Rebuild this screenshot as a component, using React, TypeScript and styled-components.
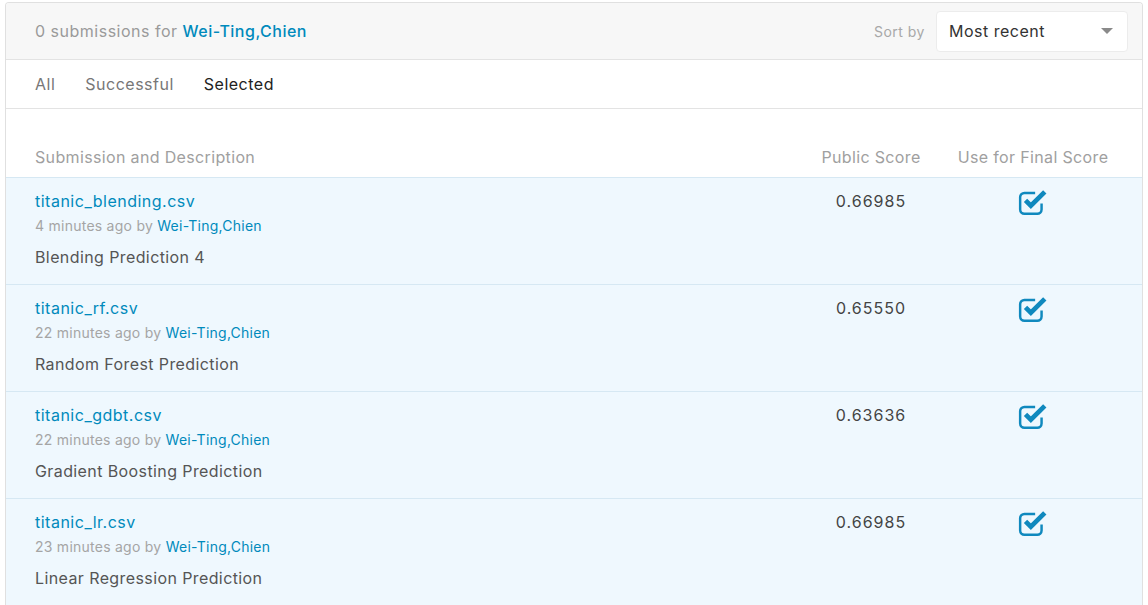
import React from "react";
import styled, { createGlobalStyle } from "styled-components";

interface Submission {
  file: string;
  ago: string;
  author: string;
  description: string;
  score: string;
}

const submissions: Submission[] = [
  {
    file: "titanic_blending.csv",
    ago: "4 minutes ago",
    author: "Wei-Ting,Chien",
    description: "Blending Prediction 4",
    score: "0.66985",
  },
  {
    file: "titanic_rf.csv",
    ago: "22 minutes ago",
    author: "Wei-Ting,Chien",
    description: "Random Forest Prediction",
    score: "0.65550",
  },
  {
    file: "titanic_gdbt.csv",
    ago: "22 minutes ago",
    author: "Wei-Ting,Chien",
    description: "Gradient Boosting Prediction",
    score: "0.63636",
  },
  {
    file: "titanic_lr.csv",
    ago: "23 minutes ago",
    author: "Wei-Ting,Chien",
    description: "Linear Regression Prediction",
    score: "0.66985",
  },
];

const GlobalStyle = createGlobalStyle`
  body {
    margin: 0;
    background: #fff;
    font-family: Inter, "Noto Sans", sans-serif;
    letter-spacing: 0.5px;
    -webkit-font-smoothing: antialiased;
  }
`;

const Panel = styled.div`
  margin: 2px 5px 0 5px;
  border: 1px solid #e0e0e0;
  border-bottom: none;
  border-radius: 4px 4px 0 0;
  overflow: hidden;
`;

const Header = styled.div`
  display: flex;
  align-items: center;
  justify-content: space-between;
  height: 56px;
  padding: 0 14px 0 29px;
  background: #f7f7f7;
  border-bottom: 1px solid #e3e3e3;
`;

const Count = styled.div`
  font-size: 16px;
  color: #9a9a9a;
`;

const Link = styled.a<{ $weight?: number }>`
  color: #008abc;
  text-decoration: none;
  font-weight: ${(p) => p.$weight ?? 400};
`;

const SortGroup = styled.div`
  display: flex;
  align-items: center;
  gap: 11px;
`;

const SortLabel = styled.span`
  font-size: 14px;
  color: #a8a8a8;
`;

const Select = styled.div`
  display: flex;
  align-items: center;
  justify-content: space-between;
  width: 192px;
  height: 41px;
  box-sizing: border-box;
  padding: 0 14px 0 12px;
  background: #fff;
  border: 1px solid #ececec;
  border-radius: 4px;
  font-size: 16px;
  color: #333;
`;

const Caret = styled.span`
  width: 0;
  height: 0;
  border-left: 6px solid transparent;
  border-right: 6px solid transparent;
  border-top: 6px solid #8a8a8a;
`;

const Tabs = styled.div`
  display: flex;
  align-items: center;
  gap: 30px;
  height: 48px;
  padding: 0 29px;
  border-bottom: 1px solid #e3e3e3;
`;

const Tab = styled.span<{ $active?: boolean }>`
  font-size: 16px;
  color: ${(p) => (p.$active ? "#222" : "#777")};
`;

const Grid = styled.div`
  display: grid;
  grid-template-columns: 1fr 110px 160px;
  column-gap: 27px;
  padding: 0 29px 0 29px;
`;

const HeadRow = styled(Grid)`
  padding-top: 28px;
  height: 68px;
  box-sizing: border-box;
  align-items: center;
`;

const HeadCell = styled.div<{ $center?: boolean }>`
  font-size: 16px;
  color: #a0a0a0;
  text-align: ${(p) => (p.$center ? "center" : "left")};
  white-space: nowrap;
  letter-spacing: 0.35px;
`;

const Row = styled(Grid)`
  height: 107px;
  box-sizing: border-box;
  padding-top: 13px;
  background: #eff8fe;
  border-top: 1px solid #d6e8f3;
`;

const Info = styled.div`
  display: flex;
  flex-direction: column;
`;

const FileName = styled(Link)`
  font-size: 16px;
  line-height: 20px;
`;

const Meta = styled.div`
  margin-top: 6px;
  font-size: 14px;
  line-height: 18px;
  letter-spacing: 0.25px;
  color: #a5a5a5;
`;

const Description = styled.div`
  margin-top: 12px;
  font-size: 16px;
  line-height: 20px;
  color: #555;
  letter-spacing: 0.4px;
`;

const Score = styled.div`
  font-size: 16px;
  line-height: 20px;
  color: #444;
  text-align: center;
  letter-spacing: 1px;
`;

const CheckCell = styled.div`
  display: flex;
  justify-content: center;
  margin-top: -3px;
`;

const CheckIcon = () => (
  <svg width="30" height="28" viewBox="0 0 28 26" fill="none">
    <path
      d="M16 4.5 H6 a4 4 0 0 0 -4 4 V20 a4 4 0 0 0 4 4 H18 a4 4 0 0 0 4 -4 V14.5"
      stroke="#1089be"
      strokeWidth="2.3"
    />
    <path
      d="M7 11.5 L12 16.5 L25 3.5"
      stroke="#1089be"
      strokeWidth="4.4"
      strokeLinejoin="miter"
    />
  </svg>
);

export default function App() {
  return (
    <>
      <GlobalStyle />
      <Panel>
        <Header>
          <Count>
            0 submissions for <Link $weight={500}>Wei-Ting,Chien</Link>
          </Count>
          <SortGroup>
            <SortLabel>Sort by</SortLabel>
            <Select>
              Most recent
              <Caret />
            </Select>
          </SortGroup>
        </Header>
        <Tabs>
          <Tab>All</Tab>
          <Tab>Successful</Tab>
          <Tab $active>Selected</Tab>
        </Tabs>
        <HeadRow>
          <HeadCell>Submission and Description</HeadCell>
          <HeadCell $center>Public Score</HeadCell>
          <HeadCell $center>Use for Final Score</HeadCell>
        </HeadRow>
        {submissions.map((s) => (
          <Row key={s.file}>
            <Info>
              <FileName>{s.file}</FileName>
              <Meta>
                {s.ago} by <Link>{s.author}</Link>
              </Meta>
              <Description>{s.description}</Description>
            </Info>
            <Score>{s.score}</Score>
            <CheckCell>
              <CheckIcon />
            </CheckCell>
          </Row>
        ))}
      </Panel>
    </>
  );
}
